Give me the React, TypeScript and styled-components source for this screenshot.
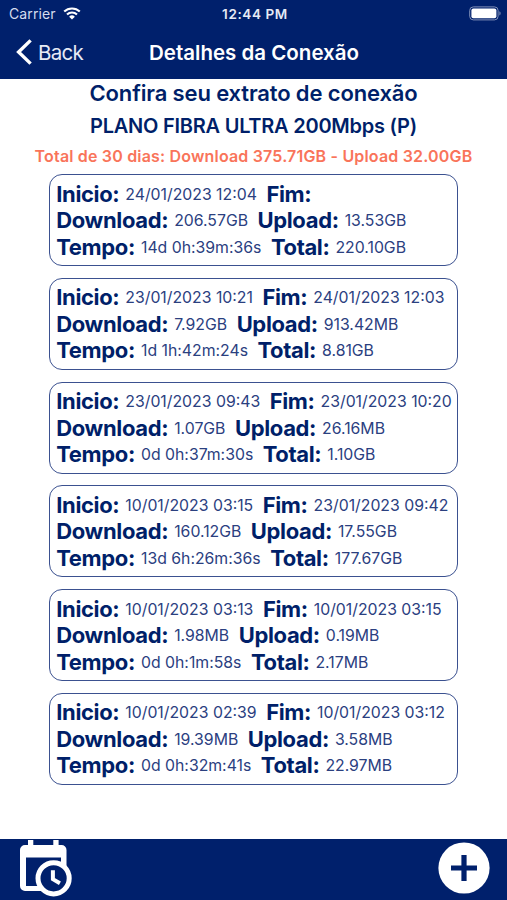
import React from 'react';
import styled, { createGlobalStyle, ThemeProvider } from 'styled-components';

const theme = {
  colors: {
    primary: '#00206c',
    text: '#001f69',
    value: '#2b407f',
    border: '#3b5190',
    highlight: '#f9745a',
    white: '#ffffff',
  },
};

const GlobalStyle = createGlobalStyle`
  * {
    box-sizing: border-box;
  }

  body {
    margin: 0;
    background: #fff;
    font-family: Inter, 'Liberation Sans', sans-serif;
  }
`;

const Screen = styled.div`
  display: flex;
  flex-direction: column;
  width: 507px;
  height: 900px;
  overflow: hidden;
  background: ${({ theme }) => theme.colors.white};
  white-space: nowrap;
`;

const Header = styled.header`
  flex: none;
  height: 79px;
  background: ${({ theme }) => theme.colors.primary};
  color: ${({ theme }) => theme.colors.white};
`;

const StatusBar = styled.div`
  display: grid;
  grid-template-columns: 1fr auto 1fr;
  align-items: center;
  height: 27px;
  padding: 0 6px 0 9px;
`;

const Carrier = styled.div`
  display: flex;
  align-items: center;
  gap: 7px;
  font-size: 14px;
  letter-spacing: 0.1px;
  color: #d5dcee;
`;

const Clock = styled.div`
  font-size: 13.5px;
  font-weight: 600;
  letter-spacing: 0.6px;
  color: #e6eaf5;
`;

const BatteryIcon = styled.svg`
  justify-self: end;
`;

const NavBar = styled.div`
  display: grid;
  grid-template-columns: 1fr auto 1fr;
  align-items: center;
  height: 50px;
  padding: 0 16px;
`;

const BackButton = styled.div`
  display: flex;
  align-items: center;
  gap: 6px;
  font-size: 20.5px;
  letter-spacing: -0.7px;
  color: #e6eaf5;
`;

const NavTitle = styled.h1`
  margin: 0 0 0 1px;
  font-size: 20.5px;
  font-weight: 600;
`;

const Content = styled.main`
  flex: 1;
  display: flex;
  flex-direction: column;
  align-items: center;
  min-height: 0;
  color: ${({ theme }) => theme.colors.text};
`;

const Heading = styled.h2`
  margin: 0;
  padding-top: 0.5px;
  font-size: 22px;
  font-weight: 600;
  line-height: 27px;
  letter-spacing: -0.14px;
`;

const PlanName = styled.h3`
  margin: 6.5px 0 0;
  font-size: 20px;
  font-weight: 600;
  line-height: 26px;
  letter-spacing: -0.24px;
`;

const Summary = styled.p`
  margin: 7px 0 0;
  font-size: 16px;
  font-weight: 600;
  line-height: 20px;
  letter-spacing: 0.18px;
  color: ${({ theme }) => theme.colors.highlight};
`;

const CardList = styled.div`
  display: flex;
  flex-direction: column;
  gap: 11.8px;
  margin-top: 8px;
`;

const Card = styled.div`
  width: 408.5px;
  height: 92px;
  padding: 5.5px 5.5px 0 6px;
  border: 1.4px solid ${({ theme }) => theme.colors.border};
  border-radius: 13px;
`;

const Row = styled.div`
  display: flex;
  align-items: center;
  height: 26.5px;
  line-height: 26.5px;
`;

const Label = styled.span`
  font-size: 22px;
  font-weight: 700;
  letter-spacing: -0.36px;
`;

const Value = styled.span`
  margin: 0 9.5px 0 6px;
  padding-top: 2px;
  font-size: 15.8px;
  color: ${({ theme }) => theme.colors.value};
`;

const Footer = styled.footer`
  flex: none;
  display: flex;
  justify-content: space-between;
  height: 61px;
  padding: 1px 17px 0 19px;
  background: ${({ theme }) => theme.colors.primary};
`;

const AddIcon = styled.svg`
  margin-top: 2px;
`;

interface Connection {
  start: string;
  end: string;
  download: string;
  upload: string;
  time: string;
  total: string;
}

const connections: Connection[] = [
  {
    start: '24/01/2023 12:04',
    end: '',
    download: '206.57GB',
    upload: '13.53GB',
    time: '14d 0h:39m:36s',
    total: '220.10GB',
  },
  {
    start: '23/01/2023 10:21',
    end: '24/01/2023 12:03',
    download: '7.92GB',
    upload: '913.42MB',
    time: '1d 1h:42m:24s',
    total: '8.81GB',
  },
  {
    start: '23/01/2023 09:43',
    end: '23/01/2023 10:20',
    download: '1.07GB',
    upload: '26.16MB',
    time: '0d 0h:37m:30s',
    total: '1.10GB',
  },
  {
    start: '10/01/2023 03:15',
    end: '23/01/2023 09:42',
    download: '160.12GB',
    upload: '17.55GB',
    time: '13d 6h:26m:36s',
    total: '177.67GB',
  },
  {
    start: '10/01/2023 03:13',
    end: '10/01/2023 03:15',
    download: '1.98MB',
    upload: '0.19MB',
    time: '0d 0h:1m:58s',
    total: '2.17MB',
  },
  {
    start: '10/01/2023 02:39',
    end: '10/01/2023 03:12',
    download: '19.39MB',
    upload: '3.58MB',
    time: '0d 0h:32m:41s',
    total: '22.97MB',
  },
];

const ConnectionCard: React.FC<{ connection: Connection }> = ({
  connection,
}) => (
  <Card>
    <Row>
      <Label>Inicio:</Label>
      <Value>{connection.start}</Value>
      <Label>Fim:</Label>
      <Value>{connection.end}</Value>
    </Row>
    <Row>
      <Label>Download:</Label>
      <Value>{connection.download}</Value>
      <Label>Upload:</Label>
      <Value>{connection.upload}</Value>
    </Row>
    <Row>
      <Label>Tempo:</Label>
      <Value>{connection.time}</Value>
      <Label>Total:</Label>
      <Value>{connection.total}</Value>
    </Row>
  </Card>
);

export const App: React.FC = () => (
  <ThemeProvider theme={theme}>
    <GlobalStyle />
    <Screen>
      <Header>
        <StatusBar>
          <Carrier>
            Carrier
            <svg width="18" height="13" viewBox="0 0 18 13" fill="none">
              <path
                d="M1.2 4.6a11.2 11.2 0 0 1 15.6 0M4 7.5a7.2 7.2 0 0 1 10 0"
                stroke="#fff"
                strokeWidth="2.1"
              />
              <path d="M9 12.6 6.1 9.7a4.1 4.1 0 0 1 5.8 0z" fill="#fff" />
            </svg>
          </Carrier>
          <Clock>12:44 PM</Clock>
          <BatteryIcon width="32" height="15" viewBox="0 0 32 15" fill="none">
            <rect
              x="0.7"
              y="0.9"
              width="28.4"
              height="13"
              rx="3.6"
              stroke="#8090b8"
              strokeWidth="1"
            />
            <rect x="2.4" y="2.6" width="25" height="9.6" rx="2" fill="#fff" />
            <path d="M30.4 5.3c1.6.6 1.6 3.6 0 4.2z" fill="#8090b8" />
          </BatteryIcon>
        </StatusBar>
        <NavBar>
          <BackButton>
            <svg width="16" height="26" viewBox="0 0 16 26" fill="none">
              <path d="M14.6 1.4 2.6 13l12 11.6" stroke="#fff" strokeWidth="3.4" />
            </svg>
            Back
          </BackButton>
          <NavTitle>Detalhes da Conexão</NavTitle>
        </NavBar>
      </Header>
      <Content>
        <Heading>Confira seu extrato de conexão</Heading>
        <PlanName>PLANO FIBRA ULTRA 200Mbps (P)</PlanName>
        <Summary>Total de 30 dias: Download 375.71GB - Upload 32.00GB</Summary>
        <CardList>
          {connections.map((connection) => (
            <ConnectionCard key={connection.start} connection={connection} />
          ))}
        </CardList>
      </Content>
      <Footer>
        <svg width="54" height="58" viewBox="0 0 54 58" fill="none">
          <path d="M9 0h5.300v8H9zM34.300 0h5.300v8h-5.300z" fill="#fff" />
          <path
            d="M6 5h36.500a5 5 0 0 1 5 5v17H42v-9.500H7V46h15v5H6a5 5 0 0 1-5-5V10a5 5 0 0 1 5-5z"
            fill="#fff"
          />
          <circle
            cx="34.600"
            cy="38.300"
            r="15.600"
            fill="#00206c"
            stroke="#fff"
            strokeWidth="5"
          />
          <path d="M33.900 30.200v9l7 4" stroke="#fff" strokeWidth="4" />
        </svg>
        <AddIcon width="52" height="52" viewBox="0 0 52 52" fill="none">
          <circle cx="26" cy="26" r="25.600" fill="#fff" />
          <path d="M26 13v26M13 26h26" stroke="#00206c" strokeWidth="5.200" />
        </AddIcon>
      </Footer>
    </Screen>
  </ThemeProvider>
);

export default App;
